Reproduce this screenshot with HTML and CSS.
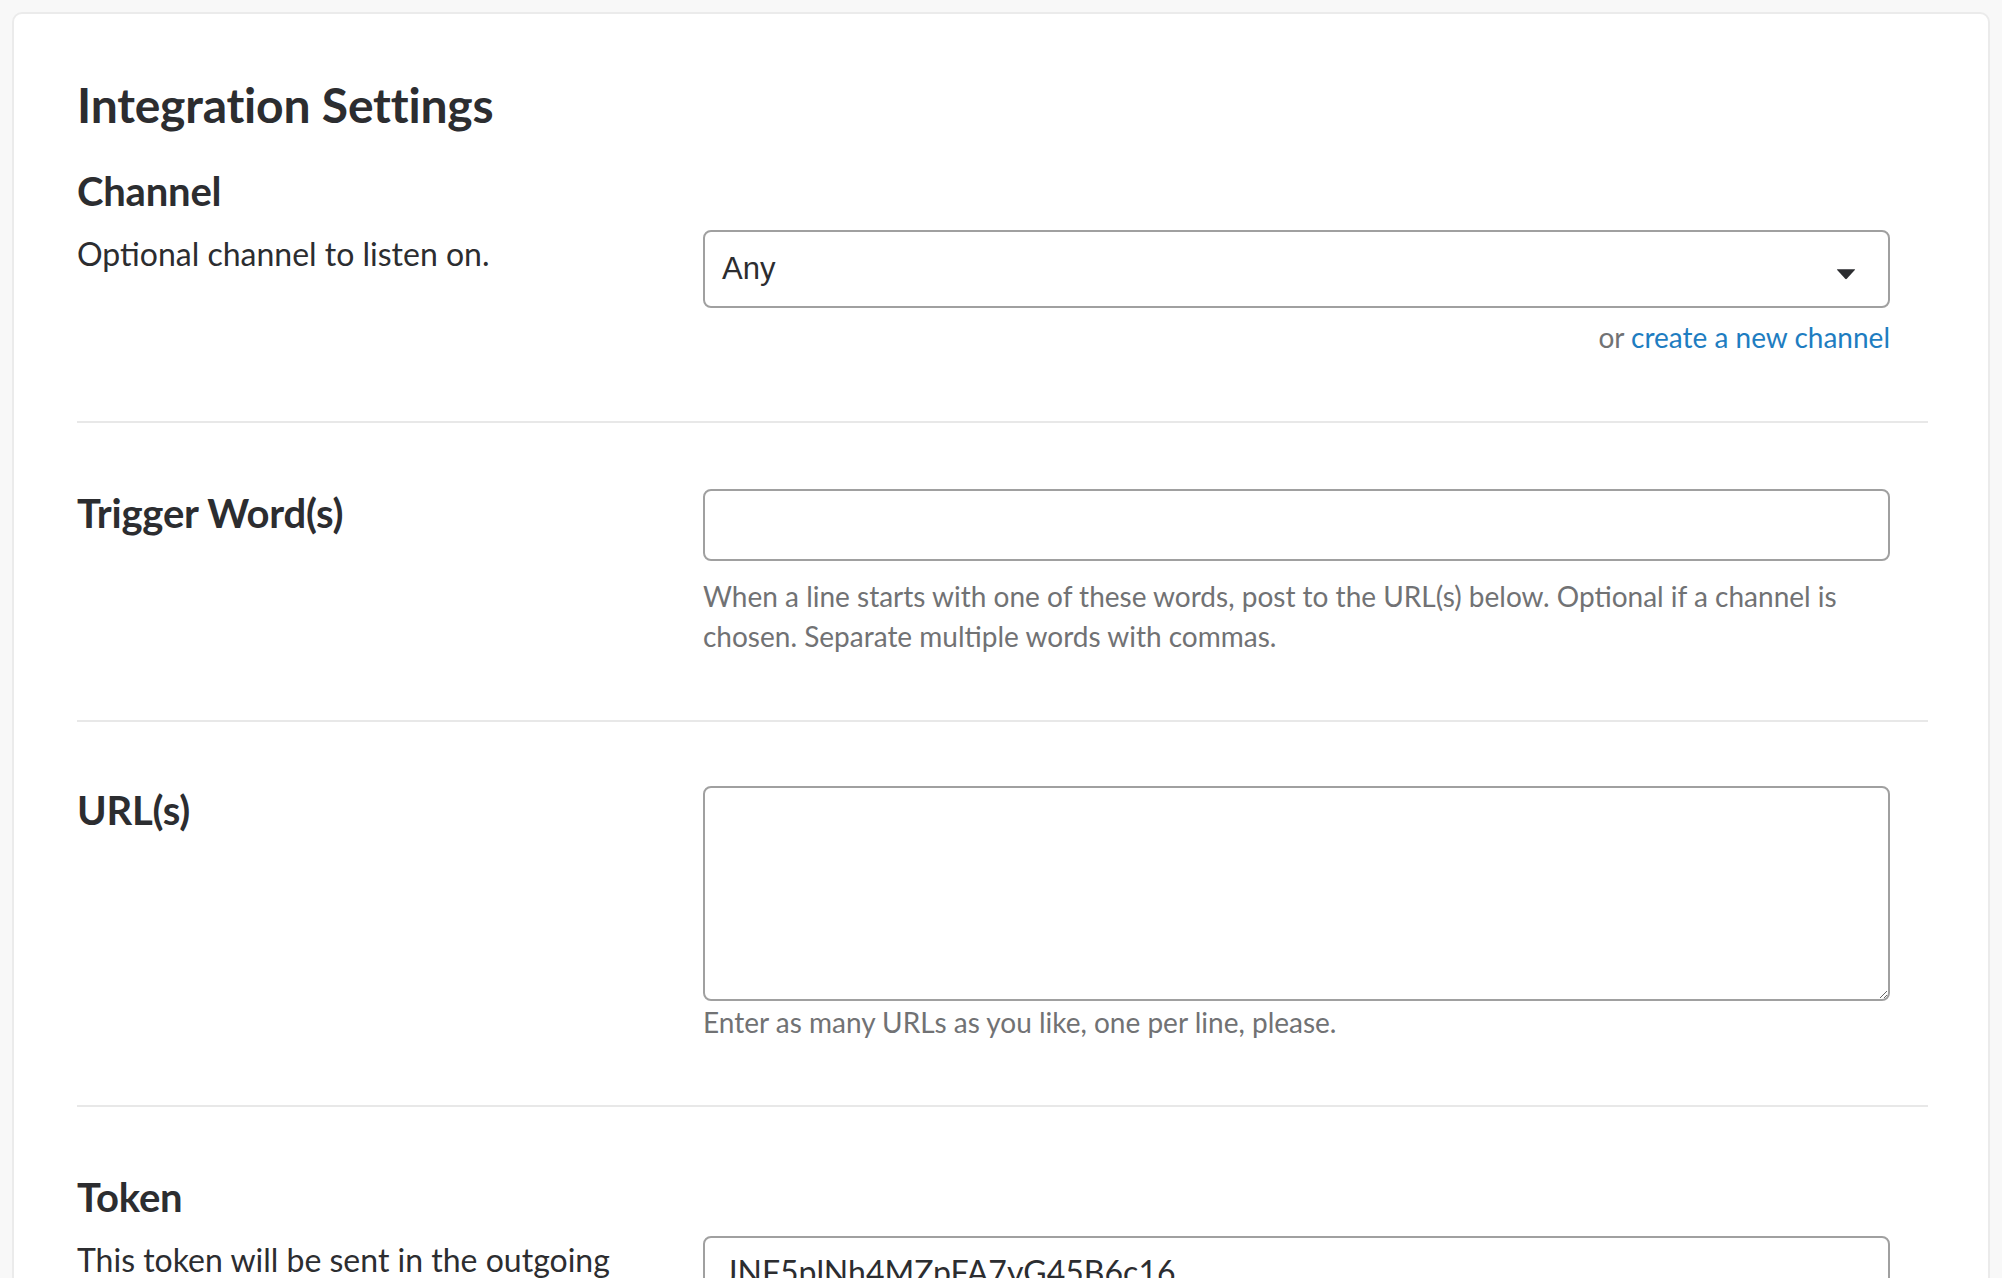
FILE: index.html
```html
<!DOCTYPE html>
<html lang="en">
<head>
<meta charset="utf-8">
<title>Integration Settings</title>
<link rel="stylesheet" href="styles.css">
</head>
<body>
<div class="card">
  <h2 class="title">Integration Settings</h2>

  <section class="row row-stacked">
    <h3 class="label">Channel</h3>
    <div class="cols">
      <p class="desc">Optional channel to listen on.</p>
      <div class="field">
        <div class="select">
          <span class="select-value">Any</span>
          <svg class="caret" width="20" height="12" viewBox="0 0 20 12" aria-hidden="true"><path d="M1.5 1.2 L18.5 1.2 Q19.6 1.2 18.8 2.1 L10.8 10.8 Q10 11.6 9.2 10.8 L1.2 2.1 Q0.4 1.2 1.5 1.2 Z" fill="#2c2d30"/></svg>
        </div>
        <p class="aside">or <a href="#" class="link">create a new channel</a></p>
      </div>
    </div>
  </section>

  <section class="row">
    <div class="cols">
      <h3 class="label">Trigger Word(s)</h3>
      <div class="field">
        <input class="input" type="text">
        <p class="help help-gap">When a line starts with one of these words, post to the URL(s) below. Optional if a channel is chosen. Separate multiple words with commas.</p>
      </div>
    </div>
  </section>

  <section class="row row-urls">
    <div class="cols">
      <h3 class="label">URL(s)</h3>
      <div class="field">
        <textarea class="textarea"></textarea>
        <p class="help">Enter as many URLs as you like, one per line, please.</p>
      </div>
    </div>
  </section>

  <section class="row row-stacked row-last">
    <h3 class="label">Token</h3>
    <div class="cols cols-token">
      <p class="desc">This token will be sent in the outgoing payload. You can use it to verify the request came from your Slack team.</p>
      <div class="field">
        <input class="input input-token" type="text" value="JNF5plNh4MZpFA7yG45B6c16">
      </div>
    </div>
  </section>
</div>
</body>
</html>
```

FILE: styles.css
```css
* { box-sizing: border-box; }

html, body {
  margin: 0;
  padding: 0;
  background: #f8f8f8;
}

body {
  font-family: Lato, "Noto Sans", sans-serif;
  color: #2c2d30;
}

.card {
  margin: 12px 12px 0 12px;
  background: #ffffff;
  border: 2px solid #ebebeb;
  border-radius: 10px;
  padding: 62px 60px 64px 63px;
  min-height: 1400px;
}

.title {
  margin: 0;
  font-size: 48px;
  line-height: 1.2;
  font-weight: 700;
  letter-spacing: -0.2px;
}

.row {
  padding: 66px 0 64px 0;
  border-bottom: 2px solid #e8e8e8;
}

.row-stacked {
  padding-top: 33px;
}

.row-stacked .cols {
  margin-top: 15px;
}

.row-urls {
  padding-top: 64px;
  padding-bottom: 63px;
}

.row-last {
  border-bottom: none;
  padding-top: 66px;
}

.row-stacked .cols-token {
  margin-top: 15px;
}

.cols {
  display: grid;
  grid-template-columns: 626px 1187px;
  align-items: start;
}

.label {
  margin: 0;
  font-size: 40px;
  line-height: 1.2;
  font-weight: 700;
  letter-spacing: -0.2px;
}

.desc {
  margin: 0;
  font-size: 32px;
  line-height: 48px;
  padding-right: 40px;
}

.field {
  display: flex;
  flex-direction: column;
}

.select {
  height: 78px;
  border: 2px solid #a0a0a0;
  border-radius: 8px;
  display: flex;
  align-items: center;
  justify-content: space-between;
  padding: 0 32px 0 17px;
  background: #fff;
}

.select-value {
  font-family: "Liberation Sans", Arial, sans-serif;
  font-size: 31px;
  color: #2c2d30;
}

.caret {
  display: block;
  margin-top: 11px;
}

.aside {
  margin: 9px 0 0 0;
  text-align: right;
  font-size: 28px;
  line-height: 40px;
  color: #717274;
}

.link {
  color: #1e7dc1;
  text-decoration: none;
}

.input {
  display: block;
  width: 100%;
  height: 72px;
  border: 2px solid #a0a0a0;
  border-radius: 8px;
  padding: 0 24px;
  font-family: Lato, "Noto Sans", sans-serif;
  font-size: 32px;
  color: #2c2d30;
  background: #fff;
  outline: none;
}

.input-token {
  padding-left: 19px;
}

.textarea {
  display: block;
  width: 100%;
  height: 215px;
  border: 2px solid #a0a0a0;
  border-radius: 8px;
  padding: 16px 24px;
  font-family: Lato, "Noto Sans", sans-serif;
  font-size: 28px;
  background: #fff;
  resize: vertical;
  outline: none;
}

.help {
  margin: 1px 0 0 0;
  font-size: 28px;
  line-height: 40px;
  color: #717274;
}

.help-gap {
  margin-top: 15px;
}
```
